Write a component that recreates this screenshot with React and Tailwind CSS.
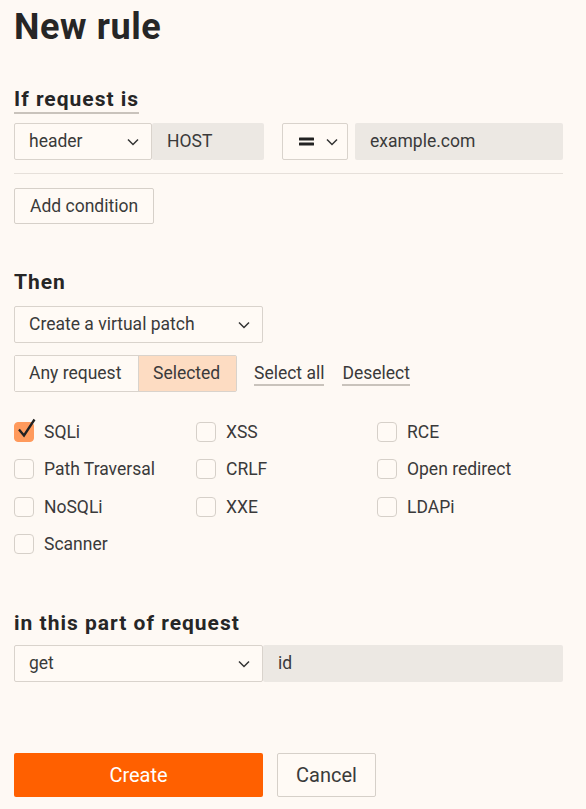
import React from 'react';

function Chevron() {
  return (
    <svg width="12" height="8" viewBox="0 0 12 8" fill="none" className="shrink-0">
      <path d="M1 1.5 6 6.5l5-5" stroke="#333" strokeWidth="1.5" />
    </svg>
  );
}

function Select({ value, className = '' }) {
  return (
    <div className={`h-[37px] flex items-center justify-between pl-[14px] pr-[12px] border border-[#d9d3cc] bg-[#fffaf5] rounded-[2px] text-[17.5px] text-[#3a3a3a] ${className}`}>
      <span>{value}</span>
      <Chevron />
    </div>
  );
}

function Field({ value, className = '' }) {
  return (
    <div className={`h-[37px] flex items-center px-[15px] bg-[#ece8e3] rounded-[2px] text-[17.5px] text-[#3a3a3a] ${className}`}>
      {value}
    </div>
  );
}

function Check({ label, checked }) {
  return (
    <label className="flex items-center gap-[10px] h-[37.5px] text-[17.5px] text-[#3a3a3a]">
      <span className={`relative w-[20px] h-[20px] rounded-[4px] border ${checked ? 'bg-[#ff9a5c] border-[#ff9a5c]' : 'border-[#d6d0c9] bg-[#fffaf5]'}`}>
        {checked && (
          <svg width="22" height="22" viewBox="0 0 22 22" className="absolute left-[1px] top-[-6px]" fill="none">
            <path d="M3 12.5l5 6L18.5 2.5" stroke="#222" strokeWidth="2.3" />
          </svg>
        )}
      </span>
      {label}
    </label>
  );
}

const attacks = [
  ['SQLi', true], ['XSS'], ['RCE'],
  ['Path Traversal'], ['CRLF'], ['Open redirect'],
  ['NoSQLi'], ['XXE'], ['LDAPi'],
  ['Scanner'],
];

export default function App() {
  return (
    <div className="min-h-[809px] bg-[#fef9f4] px-[14px] pt-[5px] text-[#2a2a2a]" style={{ fontFamily: 'Roboto, "Noto Sans", sans-serif' }}>
      <h1 className="text-[36px] font-bold leading-[44px] tracking-[0.6px] text-[#262626]">New rule</h1>

      <div className="mt-[37px] flex">
        <h2 className="text-[21px] font-bold leading-[26px] tracking-[1px] border-b-2 border-[#c9c3bc] text-[#262626]">If request is</h2>
      </div>
      <div className="mt-[9px] flex w-[549px] pb-[13px] border-b border-[#e6e0da]">
        <Select value="header" className="w-[138px]" />
        <Field value="HOST" className="w-[112px]" />
        <div className="ml-[18px] h-[37px] w-[66px] flex items-center justify-between pl-[16px] pr-[9px] border border-[#d9d3cc] bg-[#fffaf5] rounded-[2px]">
          <svg width="15" height="9" viewBox="0 0 15 9">
            <rect x="0" y="0.5" width="15" height="3" rx="0.5" fill="#222" />
            <rect x="0" y="5.5" width="15" height="3" rx="0.5" fill="#222" />
          </svg>
          <Chevron />
        </div>
        <Field value="example.com" className="ml-[7px] flex-1" />
      </div>
      <button className="mt-[14px] h-[36px] px-[15px] border border-[#d6d0c9] rounded-[2px] bg-[#fffaf5] text-[17.5px] text-[#3a3a3a]">Add condition</button>

      <h2 className="mt-[45px] text-[21px] font-bold leading-[26px] tracking-[1px] text-[#262626]">Then</h2>
      <Select value="Create a virtual patch" className="mt-[11px] w-[249px]" />

      <div className="mt-[12px] flex items-center">
        <div className="flex h-[37px] border border-[#d9d3cc] rounded-[2px] text-[17.5px] text-[#3a3a3a]">
          <span className="flex items-center w-[123px] pl-[14px] bg-[#fffaf5]">Any request</span>
          <span className="flex items-center w-[98px] pl-[14px] bg-[#fddcc2] border-l border-[#d9d3cc]">Selected</span>
        </div>
        <span className="ml-[17px] text-[17.5px] text-[#3a3a3a] leading-[22px] border-b-2 border-[#c9c3bc]">Select all</span>
        <span className="ml-[18px] text-[17.5px] text-[#3a3a3a] leading-[22px] border-b-2 border-[#c9c3bc]">Deselect</span>
      </div>

      <div className="mt-[21px] grid grid-cols-[182px_181px_1fr]">
        {attacks.map(([label, checked]) => (
          <Check key={label} label={label} checked={checked} />
        ))}
      </div>

      <h2 className="mt-[47px] text-[21px] font-bold leading-[26px] tracking-[1px] text-[#262626]">in this part of request</h2>
      <div className="mt-[9px] flex w-[549px]">
        <Select value="get" className="w-[249px]" />
        <Field value="id" className="flex-1" />
      </div>

      <div className="mt-[71px] flex gap-[14px]">
        <button className="h-[44px] w-[249px] bg-[#ff6000] rounded-[2px] text-[20px] text-white">Create</button>
        <button className="h-[44px] w-[99px] border border-[#d6d0c9] rounded-[2px] bg-[#fffaf5] text-[20px] text-[#3a3a3a]">Cancel</button>
      </div>
    </div>
  );
}
